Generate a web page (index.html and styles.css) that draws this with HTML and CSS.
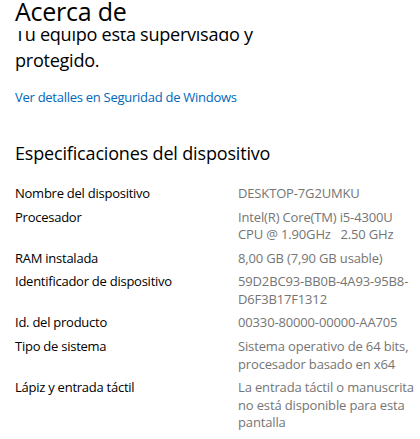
FILE: index.html
```html
<!DOCTYPE html>
<html lang="es">
<head>
<meta charset="utf-8">
<title>Acerca de</title>
<link rel="stylesheet" href="styles.css">
</head>
<body>
<div class="page">
  <header class="page-header">
    <h1 class="page-title">Acerca de</h1>
  </header>
  <main class="scroll">
    <div class="content">
      <p class="status">Tu equipo está supervisado y<br>protegido.</p>
      <a class="link" href="#">Ver detalles en Seguridad de Windows</a>
      <h2 class="section-title">Especificaciones del dispositivo</h2>
      <dl class="specs">
        <dt>Nombre del dispositivo</dt>
        <dd>DESKTOP-7G2UMKU</dd>
        <dt>Procesador</dt>
        <dd>Intel(R) Core(TM) i5-4300U<br>CPU @ 1.90GHz&nbsp;&nbsp; 2.50 GHz</dd>
        <dt>RAM instalada</dt>
        <dd>8,00 GB (7,90 GB usable)</dd>
        <dt>Identificador de dispositivo</dt>
        <dd>59D2BC93-BB0B-4A93-95B8-<br>D6F3B17F1312</dd>
        <dt>Id. del producto</dt>
        <dd>00330-80000-00000-AA705</dd>
        <dt>Tipo de sistema</dt>
        <dd>Sistema operativo de 64 bits,<br>procesador basado en x64</dd>
        <dt>Lápiz y entrada táctil</dt>
        <dd>La entrada táctil o manuscrita<br>no está disponible para esta<br>pantalla</dd>
      </dl>
    </div>
  </main>
</div>
</body>
</html>
```

FILE: styles.css
```css
* { box-sizing: border-box; }
html, body { margin: 0; padding: 0; background: #fff; }
body {
  font-family: "Open Sans", "Noto Sans", sans-serif;
  color: #000;
}
.page {
  width: 420px;
  height: 439px;
  display: flex;
  flex-direction: column;
  overflow: hidden;
}
.page-header {
  height: 31px;
  flex: none;
  padding-left: 15px;
  background: #fff;
}
.page-title {
  margin: 0;
  font-size: 25px;
  font-weight: 400;
  letter-spacing: -0.25px;
  line-height: 22px;
}
.scroll {
  flex: 1;
  overflow: hidden;
}
.content {
  margin-top: -9.6px;
  padding-left: 15px;
  display: flex;
  flex-direction: column;
  align-items: flex-start;
}
.status {
  margin: 0;
  font-size: 18.1px;
  letter-spacing: -0.28px;
  line-height: 26px;
}
.link {
  margin-top: 16px;
  font-size: 13px;
  letter-spacing: -0.27px;
  line-height: 17.5px;
  color: #0067b8;
  text-decoration: none;
}
.section-title {
  margin: 33.5px 0 0;
  font-size: 18px;
  letter-spacing: -0.17px;
  font-weight: 400;
  line-height: 26px;
}
.specs {
  margin: 18.5px 0 0;
  display: grid;
  grid-template-columns: 223px auto;
  row-gap: 6.15px;
  font-size: 13px;
  line-height: 17.5px;
}
.specs dt { margin: 0; color: #000; letter-spacing: -0.25px; }
.specs dd { margin: 0; color: #757575; letter-spacing: -0.15px; white-space: nowrap; }
```
